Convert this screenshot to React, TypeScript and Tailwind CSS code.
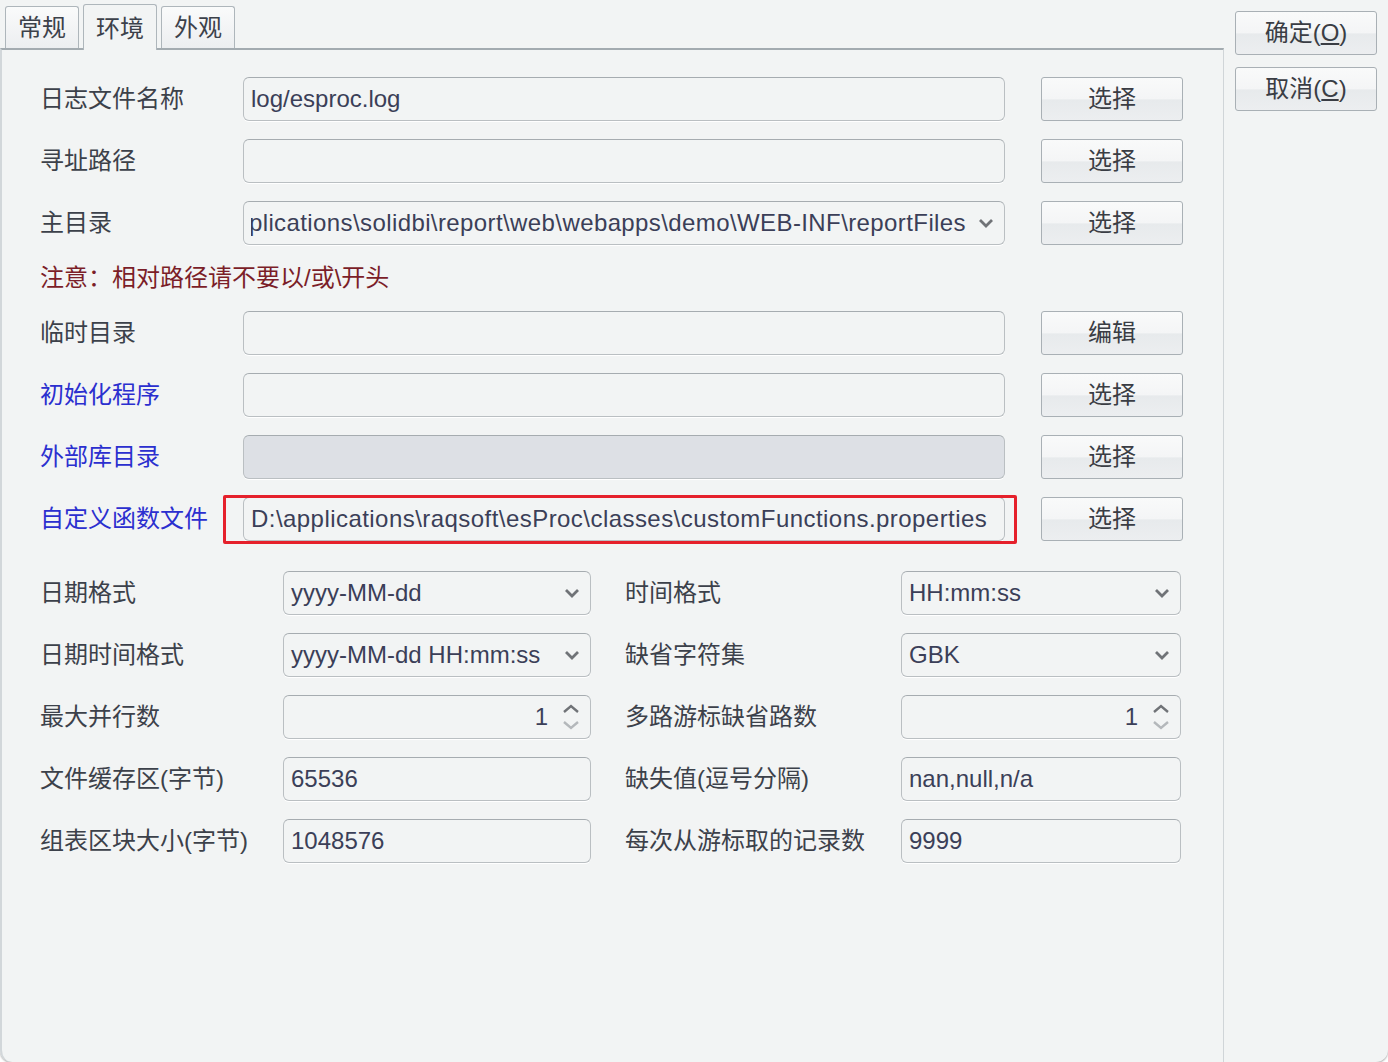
import type { ReactNode } from "react"

const FONT = "font-['Liberation_Sans','Noto_Sans_CJK_SC',sans-serif]"

function Chevron() {
  return (
    <svg width="16" height="10" viewBox="0 0 16 10" className="shrink-0">
      <path d="M2 2 L8 8 L14 2" fill="none" stroke="#707377" strokeWidth="2.8" />
    </svg>
  )
}

function Spin() {
  return (
    <div className="flex flex-col items-center gap-[6px] shrink-0">
      <svg width="18" height="10" viewBox="0 0 18 10">
        <path d="M2 8 L9 2 L16 8" fill="none" stroke="#707377" strokeWidth="2.4" />
      </svg>
      <svg width="18" height="10" viewBox="0 0 18 10">
        <path d="M2 2 L9 8 L16 2" fill="none" stroke="#b4b8bb" strokeWidth="2.4" />
      </svg>
    </div>
  )
}

function Box({ children, disabled, className = "" }: { children?: ReactNode; disabled?: boolean; className?: string }) {
  return (
    <div
      className={`flex items-center h-[44px] rounded-[6px] border border-[#babfc2] border-t-[#a6acb0] shadow-[0_1px_0_#ffffff] pl-[7px] pr-[10px] text-[24px] text-[#3b3f58] ${
        disabled ? "bg-[#dde0e5]" : "bg-[#f2f4f4]"
      } ${className}`}
    >
      {children}
    </div>
  )
}

function Btn({ children }: { children: ReactNode }) {
  return (
    <button className="h-[44px] w-[142px] rounded-[3px] border border-[#a9b0b5] bg-[linear-gradient(#f9fafa_0%,#f4f5f6_50%,#e7eaec_52%,#eceef0_100%)] text-[24px] text-[#3a3d44] flex items-center justify-center">
      {children}
    </button>
  )
}

function Tab({ label, active }: { label: string; active?: boolean }) {
  return (
    <div
      className={`w-[74px] flex items-center justify-center text-[24px] text-[#3c414a] rounded-t-[3px] border border-[#aeb6bb] ${
        active
          ? "h-[46px] -mb-[2px] border-b-0 bg-[#f2f4f4] z-10 pt-[2px]"
          : "h-[42px] bg-[linear-gradient(#fafbfb,#eceef0)] border-b-0"
      }`}
    >
      {label}
    </div>
  )
}

type Row = { label: string; color: string; value?: string; kind?: string; btn: string }

const upperRows: Row[] = [
  { label: "日志文件名称", color: "text-[#3c414a]", value: "log/esproc.log", btn: "选择" },
  { label: "寻址路径", color: "text-[#3c414a]", value: "", btn: "选择" },
  { label: "主目录", color: "text-[#3c414a]", kind: "combo", btn: "选择" },
]

const upperRows2: Row[] = [
  { label: "临时目录", color: "text-[#3c414a]", value: "", btn: "编辑" },
  { label: "初始化程序", color: "text-[#2b2fcf]", value: "", btn: "选择" },
  { label: "外部库目录", color: "text-[#2b2fcf]", kind: "disabled", btn: "选择" },
  {
    label: "自定义函数文件",
    color: "text-[#2b2fcf]",
    value: "D:\\applications\\raqsoft\\esProc\\classes\\customFunctions.properties",
    kind: "marked",
    btn: "选择",
  },
]

type F = { t: "combo" | "spin" | "text"; v: string }

const lowerRows: [string, F, string, F][] = [
  ["日期格式", { t: "combo", v: "yyyy-MM-dd" }, "时间格式", { t: "combo", v: "HH:mm:ss" }],
  ["日期时间格式", { t: "combo", v: "yyyy-MM-dd HH:mm:ss" }, "缺省字符集", { t: "combo", v: "GBK" }],
  ["最大并行数", { t: "spin", v: "1" }, "多路游标缺省路数", { t: "spin", v: "1" }],
  ["文件缓存区(字节)", { t: "text", v: "65536" }, "缺失值(逗号分隔)", { t: "text", v: "nan,null,n/a" }],
  ["组表区块大小(字节)", { t: "text", v: "1048576" }, "每次从游标取的记录数", { t: "text", v: "9999" }],
]

function LowerField({ f }: { f: F }) {
  if (f.t === "combo")
    return (
      <Box className="justify-between pr-[8px]">
        <span>{f.v}</span>
        <Chevron />
      </Box>
    )
  if (f.t === "spin")
    return (
      <Box className="justify-end gap-[14px] pr-[6px]">
        <span>{f.v}</span>
        <Spin />
      </Box>
    )
  return (
    <Box>
      <span>{f.v}</span>
    </Box>
  )
}

function UpperRow({ r }: { r: Row }) {
  return (
    <div className="grid grid-cols-[203px_762px_36px_142px] items-center h-[44px]">
      <span className={`text-[24px] ${r.color}`}>{r.label}</span>
      {r.kind === "combo" ? (
        <Box className="pr-[8px] gap-[12px]">
          <div className="flex-1 flex justify-end overflow-hidden whitespace-nowrap tracking-[0.4px]">
            <span>D:\applications\solidbi\report\web\webapps\demo\WEB-INF\reportFiles</span>
          </div>
          <Chevron />
        </Box>
      ) : r.kind === "disabled" ? (
        <Box disabled />
      ) : r.kind === "marked" ? (
        <div className="relative">
          <Box className="whitespace-nowrap overflow-hidden tracking-[0.45px]">
            <span>{r.value}</span>
          </Box>
          <div className="absolute -left-[20px] -right-[12px] -top-[2px] -bottom-[3px] border-[3px] border-[#e5202b] rounded-[2px]" />
        </div>
      ) : (
        <Box>
          <span>{r.value}</span>
        </Box>
      )}
      <span />
      <Btn>{r.btn}</Btn>
    </div>
  )
}

export default function App() {
  return (
    <div className={`w-[1388px] h-[1062px] bg-white ${FONT}`}>
      <div className="flex h-[1062px] bg-[#f2f4f4] rounded-b-[12px] shadow-[0_1px_2px_rgba(0,0,0,0.35)]">
        {/* tab area */}
        <div className="w-[1224px] flex flex-col">
          <div className="flex items-end h-[48px] pl-[5px] gap-[4px]">
            <Tab label="常规" />
            <Tab label="环境" active />
            <Tab label="外观" />
          </div>
          <div className="flex-1 border-t-2 border-t-[#a3abb0] border-l-2 border-l-[#d2d7da] border-r border-r-[#d0d5d8] rounded-bl-[12px] pl-[38px] pt-[27px]">
            <div className="flex flex-col gap-[18px]">
              {upperRows.map((r) => (
                <UpperRow key={r.label} r={r} />
              ))}
              <div className="h-[30px] flex items-center text-[24px] text-[#7b1e28]">
                注意：相对路径请不要以/或\开头
              </div>
              {upperRows2.map((r) => (
                <UpperRow key={r.label} r={r} />
              ))}
            </div>
            <div className="mt-[30px] flex flex-col gap-[18px]">
              {lowerRows.map(([l1, f1, l2, f2]) => (
                <div key={l1} className="grid grid-cols-[243px_308px_34px_276px_280px] items-center h-[44px]">
                  <span className="text-[24px] text-[#3c414a] whitespace-nowrap">{l1}</span>
                  <LowerField f={f1} />
                  <span />
                  <span className="text-[24px] text-[#3c414a] whitespace-nowrap">{l2}</span>
                  <LowerField f={f2} />
                </div>
              ))}
            </div>
          </div>
        </div>
        {/* dialog buttons */}
        <div className="flex flex-col gap-[12px] pt-[11px] pl-[11px]">
          <Btn>
            确定(<span className="underline underline-offset-2">O</span>)
          </Btn>
          <Btn>
            取消(<span className="underline underline-offset-2">C</span>)
          </Btn>
        </div>
      </div>
    </div>
  )
}
